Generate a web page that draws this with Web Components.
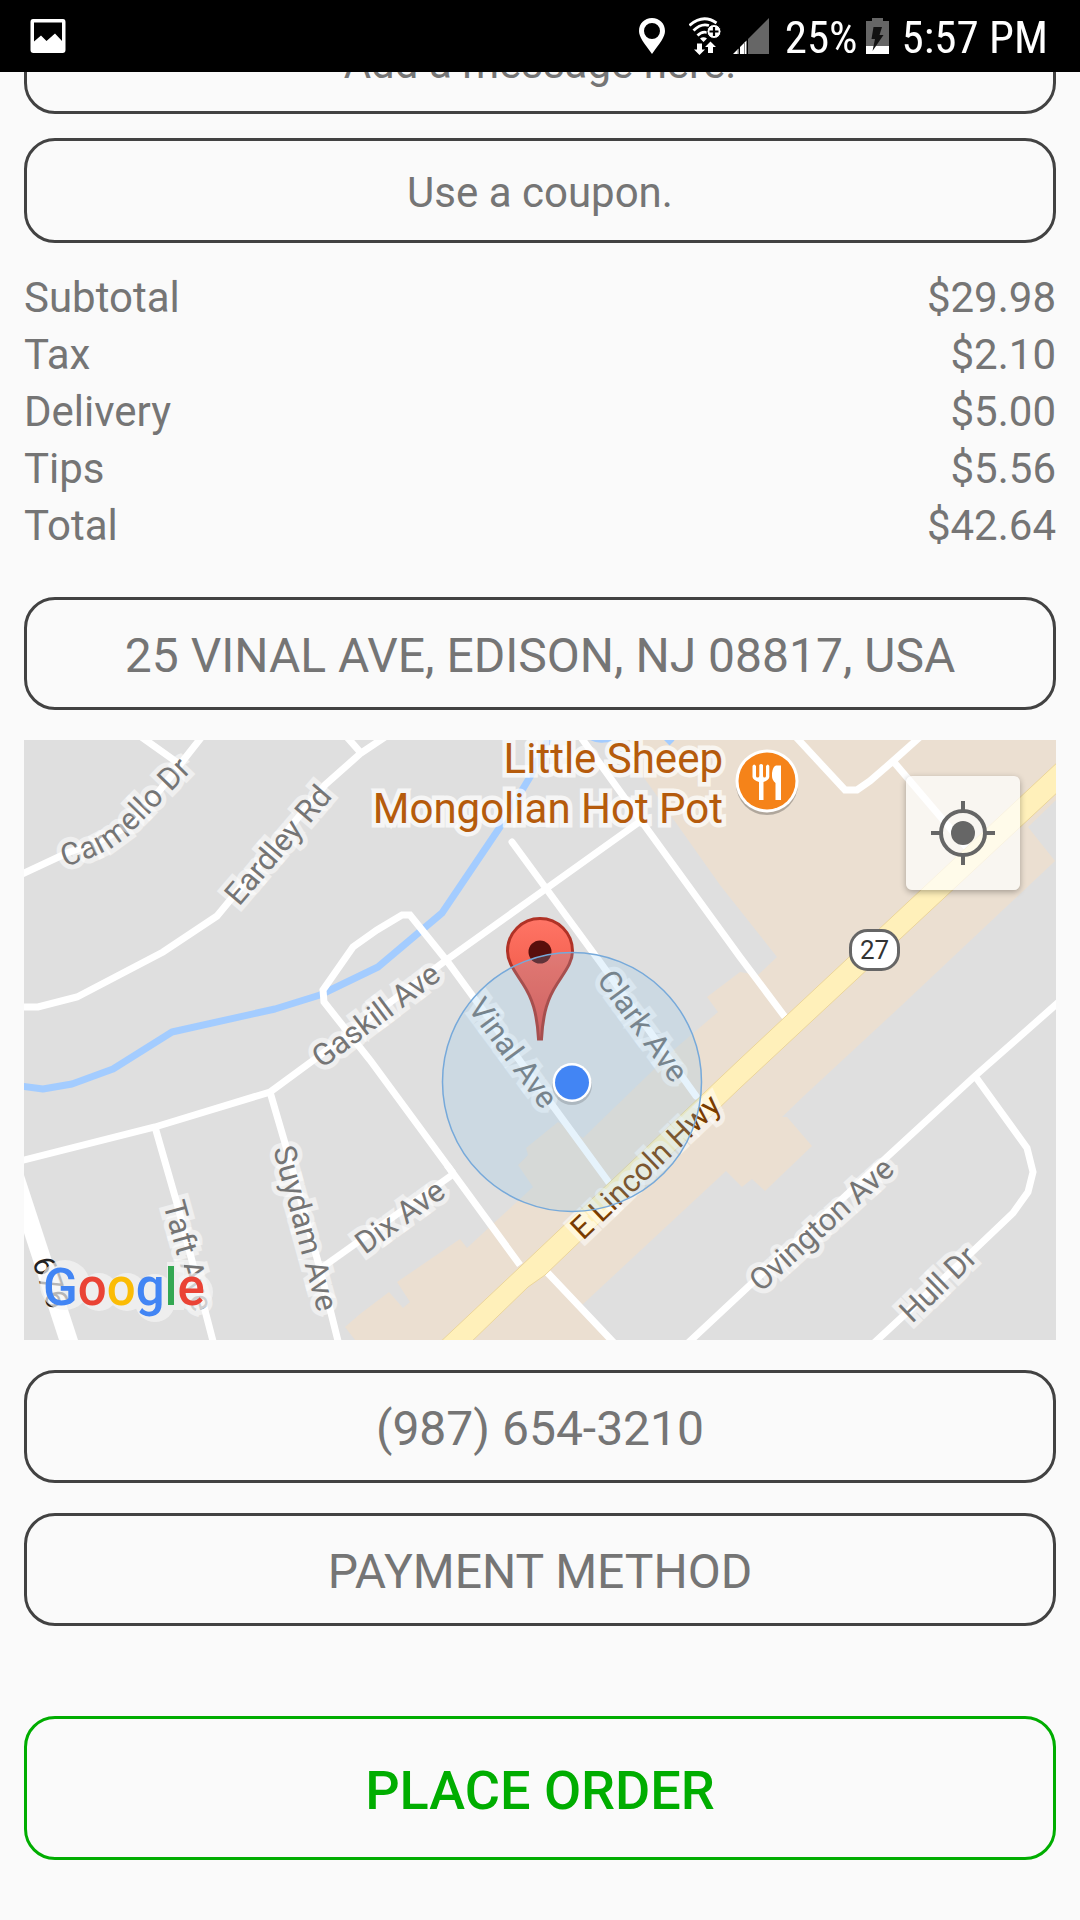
<!DOCTYPE html>
<html lang="en">
<head>
<meta charset="utf-8">
<meta name="viewport" content="width=device-width, initial-scale=1">
<title>Checkout</title>
<style>
  body { margin: 0; background: #fafafa; font-family: Roboto, "Liberation Sans", sans-serif; color: #757575; }
</style>
</head>
<body>
<checkout-page></checkout-page>

<template id="status-bar">
  <style>
    :host { position: fixed; inset: 0 0 auto 0; z-index: 2; box-sizing: border-box; height: 72px; padding: 0 32px 0 30px;
      display: flex; align-items: center; justify-content: space-between; background: #000; color: #fff;
      font-family: "Roboto Condensed", Roboto, sans-serif; font-size: 45px; line-height: 72px; white-space: nowrap; }
    svg { display: block; flex: none; }
    .right { display: flex; align-items: center; }
    .wifi { margin-left: 24px; }
    .signal { margin-left: 12px; }
    .percent { margin-left: 16px; }
    .battery { margin: 0 13px 0 8px; }
    span { padding-top: 4px; }
  </style>
  <svg width="36" height="36" viewBox="0 0 36 36" role="img" aria-label="Screenshot saved">
    <path fill="#fff" fill-rule="evenodd" d="M3 1H33Q35.500 1 35.500 4V32Q35.500 35 32.500 35H3.500Q0.500 35 0.500 32V4Q0.500 1 3 1ZM4 4.500V23.500L11 17.500L16.500 23L25 15.500L32 23V4.500Z"/>
  </svg>
  <div class="right">
    <svg width="26" height="36" viewBox="0 0 26 36" role="img" aria-label="Location on">
      <path fill="#fff" fill-rule="evenodd" d="M13 0C5.500 0 0 5.500 0 13C0 19 5 25 13 36C21 25 26 19 26 13C26 5.500 20.500 0 13 0ZM13 5A8 8 0 1 1 13 21A8 8 0 1 1 13 5Z"/>
    </svg>
    <svg class="wifi" width="32" height="38" viewBox="0 0 32 38" role="img" aria-label="Wi-Fi">
      <g fill="none" stroke="#fff" stroke-width="2.800">
        <path d="M0.500 8.500Q14 -3.500 27.500 6"/>
        <path d="M4.500 13.500Q12 6 20 8.500"/>
        <path d="M8.500 18.500Q13 14 18 15.500"/>
      </g>
      <circle cx="25" cy="14.500" r="7" fill="#fff" stroke="#000"/>
      <path d="M25 10V19M20.500 14.500H29.500" stroke="#000" stroke-width="2.200"/>
      <path fill="#fff" d="M11 21.500Q14.500 19 18 21.500L14.500 25ZM8 26.500H13V32.500H16L10.500 38L5 32.500H8ZM19 36V30H16L21.500 24.500L27 30H24V36Z"/>
    </svg>
    <svg class="signal" width="36" height="36" viewBox="0 0 36 36" role="img" aria-label="Signal strength">
      <path fill="#666" d="M15 21L36 0V36H15Z"/>
      <path fill="#fff" d="M0 36L5.500 30.500V36ZM7 36V29L13.500 22.500V36Z"/>
      <path stroke="#888" stroke-width="1" d="M11.500 25V36M5 31.500V36"/>
    </svg>
    <span class="percent">25%</span>
    <svg class="battery" width="23" height="36" viewBox="0 0 23 36" role="img" aria-label="Charging">
      <path fill="#666" d="M6 0H17V3H23V36H0V3H6Z"/>
      <path fill="#fff" d="M0 28H23V36H0Z"/>
      <path fill="#111" d="M7.500 9H16L13.500 17H17.500L6.500 33L9 21H5.500Z"/>
    </svg>
    <span>5:57 PM</span>
  </div>
</template>

<template id="outline-button">
  <style>
    :host { display: block; --ink: #757575; --line: #424242; --size: 48px; --height: 113px; --weight: 400; --drop: 4px; }
    :host([kind="small"]) { --size: 42px; --height: 105px; --drop: 6px; }
    :host([kind="primary"]) { --ink: #00ad00; --line: #00ad00; --size: 54px; --height: 144px; --weight: 500; --drop: 6px; }
    button { display: block; box-sizing: border-box; width: 100%; min-height: var(--height); margin: 0; padding: var(--drop) 24px 0;
      border: 3px solid var(--line); border-radius: 31px; background: transparent;
      font: var(--weight) var(--size)/1.2 Roboto, "Liberation Sans", sans-serif; color: var(--ink); text-align: center; }
  </style>
  <button type="button"><slot></slot></button>
</template>

<template id="order-totals">
  <style>
    :host { display: block; }
    table { width: 100%; border-collapse: collapse; font-size: 42px; line-height: 57px; }
    th, td { padding: 0; font-weight: 400; }
    th { text-align: left; }
    td { text-align: right; }
  </style>
  <table>
    <tbody>
      <tr><th scope="row">Subtotal</th><td>$29.98</td></tr>
      <tr><th scope="row">Tax</th><td>$2.10</td></tr>
      <tr><th scope="row">Delivery</th><td>$5.00</td></tr>
      <tr><th scope="row">Tips</th><td>$5.56</td></tr>
      <tr><th scope="row">Total</th><td>$42.64</td></tr>
    </tbody>
  </table>
</template>

<template id="delivery-map">
  <style>
    :host { display: block; position: relative; }
    .map { display: block; width: 100%; height: auto; }
    .labels text { font-size: 31px; fill: #757575; stroke: rgba(255,255,255,.5); stroke-width: 10px; paint-order: stroke; }
    .labels .highway { fill: #7a3c00; }
    .labels .county { fill: #222; stroke: none; }
    .poi text { font-size: 42px; fill: #b55b0c; stroke: rgba(255,255,255,.7); stroke-width: 9px; paint-order: stroke; text-anchor: end; }
    button { position: absolute; top: 36px; right: 36px; width: 114px; height: 114px; padding: 0; border: 0; border-radius: 6px;
      display: flex; align-items: center; justify-content: center; background: rgba(255,255,255,.7); box-shadow: 0 2px 6px rgba(0,0,0,.3); }
  </style>
  <svg class="map" viewBox="24 740 1032 600" role="img" aria-label="Map of the delivery address">
    <defs>
      <linearGradient id="pin" x1="0" y1="0" x2="0" y2="1"><stop offset="0" stop-color="#ff7566"/><stop offset=".45" stop-color="#f4604f"/><stop offset="1" stop-color="#e04a40"/></linearGradient>
      <path id="carmello" d="M65 867C85 860 112 852 130 834L200 762"/>
    </defs>
    <path fill="#dfdfdf" d="M24 740H1056V1340H24Z"/>
    <path fill="#ebdfd1" d="M625 740L640 772L720 885L777 957L758 975L740 972L707 997L718 1012L677 1047L583 1138L558 1122L526 1148L528 1155L518 1165L533 1187L495 1222L467 1248L460 1239L397 1282L410 1302L403 1308L389 1292L360 1314L345 1327L355 1340H612L582 1305L726 1171L742 1187L752 1179L765 1191L812 1146L787 1117H782L806 1094L902 1005L1055 861L1028 827L1056 800V740Z"/>
    <g fill="none" stroke="#a3ccff" stroke-width="7" stroke-linejoin="round">
      <path d="M20 1086L43 1089L72 1084L113 1069L172 1032L275 1009L320 995L378 967L442 913L500 827L530 777L550 736"/>
      <path d="M590 736Q600 742 612 737M664 735L672 743"/>
    </g>
    <path fill="#fff" d="M24 1175L78 1340H59L24 1233Z"/>
    <g fill="none" stroke="#fff" stroke-width="7">
      <path d="M20 875L67 853L97 842L127 827L160 790L182 762L204 734M140 736L178 763"/>
      <path d="M20 1007H38L77 997L163 952L217 916L325 785L361 753L388 735M346 736L361 753"/>
      <path d="M453 1173L370 1060L324 1002L323 990L353 947L377 930L402 915H410L447 961L610 1184"/>
      <path d="M447 1165L520 1265M546 1271L616 1345"/>
      <path d="M320 1269L452 1175"/>
      <path d="M20 1161L155 1127L270 1092L315 1059L445 961L547 888L642 820"/>
      <path stroke-linecap="round" d="M512 842L600 962L696 1096"/>
      <path d="M580 736L642 822L740 957L785 1017"/>
      <path d="M270 1092L287 1150L320 1269L339 1345M155 1127L178 1207L214 1345"/>
      <path d="M795 736L845 790H857L870 781L893 761L921 736M893 761L967 848"/>
      <path d="M1060 1001L975 1076L887 1157L688 1343M975 1076L1027 1148L1033 1172L1028 1192L1013 1213L970 1254L874 1343"/>
    </g>
    <path fill="#fff0ba" stroke="#ebd59b" d="M436 1346L520 1267L740 1059L1060 760V790L740 1088L545 1275L528 1287L467 1346Z"/>
    <g class="labels">
      <text><textPath href="#carmello">Carmello Dr</textPath></text>
      <text transform="translate(239 907) rotate(-49.500)">Eardley Rd</text>
      <text transform="translate(322 1069) rotate(-37)">Gaskill Ave</text>
      <text transform="translate(467 1008) rotate(53.700)">Vinal Ave</text>
      <text transform="translate(596 980) rotate(53.700)">Clark Ave</text>
      <text class="highway" transform="translate(583 1241) rotate(-43.700)">E Lincoln Hwy</text>
      <text transform="translate(365 1255) rotate(-36)">Dix Ave</text>
      <text transform="translate(273 1149) rotate(74.700)">Suydam Ave</text>
      <text transform="translate(163 1204) rotate(74.500)">Taft Ave</text>
      <text transform="translate(761 1293) rotate(-42)">Ovington Ave</text>
      <text transform="translate(912 1324) rotate(-44)">Hull Dr</text>
      <text class="county" transform="translate(32 1261) rotate(71)">676</text>
    </g>
    <g>
      <rect x="850.500" y="930.500" width="48" height="39" rx="17" fill="#fff" stroke="#666" stroke-width="3"/>
      <text x="874.500" y="959" font-size="26" text-anchor="middle" fill="#333">27</text>
    </g>
    <g class="poi">
      <text x="723" y="773">Little Sheep</text>
      <text x="723" y="823">Mongolian Hot Pot</text>
      <circle cx="767" cy="784" r="31" fill="#000" opacity=".25"/>
      <circle cx="767" cy="781" r="31.500" fill="#fff"/>
      <circle cx="767" cy="781" r="28.500" fill="#f58319"/>
      <path fill="#fff" d="M752.500 766Q754 763 756 766V776Q756 777.500 757.500 777.500Q759.300 777.500 759.300 776V765Q761 763 763 765V776Q763 777.500 764.500 777.500Q766 777.500 766 776V766Q768 763 769.300 766V777Q769 780 763.500 782V800H759V782Q753 780 752.500 777ZM781 765.500V800H775.500V783Q772 780 772 776V773Q773 766 776 765.500Z"/>
    </g>
    <g>
      <path fill="url(#pin)" stroke="#b03226" stroke-width="3" d="M538.500 1039C537 1012 532 998 523 984C514 970 507.500 962 507.500 951A32.500 32.500 0 0 1 572.500 951C572.500 962 566 970 557 984C548 998 543 1012 541.500 1039Z"/>
      <circle cx="540" cy="952" r="11.500" fill="#590f0c"/>
    </g>
    <circle cx="572" cy="1082" r="129.500" fill="rgba(130,195,240,.2)" stroke="#76a9da" stroke-width="1.500"/>
    <circle cx="572" cy="1085" r="20" fill="#000" opacity=".15"/>
    <circle cx="572" cy="1082.500" r="19.500" fill="#fff"/>
    <circle cx="572" cy="1082.500" r="17" fill="#4285f4"/>
    <g fill="#f5f5f5" opacity=".7">
      <circle cx="65" cy="1285" r="25"/>
      <circle cx="99" cy="1292" r="19"/>
      <circle cx="127" cy="1292" r="19"/>
      <circle cx="155" cy="1293" r="19"/>
      <circle cx="155" cy="1302" r="20"/>
      <path d="M167 1262H184V1310H167Z"/>
      <circle cx="194" cy="1292" r="19"/>
    </g>
    <text x="43" y="1305" font-size="51" font-weight="500"><tspan fill="#4285f4">G</tspan><tspan fill="#ea4335">o</tspan><tspan fill="#fbbc05">o</tspan><tspan fill="#4285f4">g</tspan><tspan fill="#34a853">l</tspan><tspan fill="#ea4335">e</tspan></text>
  </svg>
  <button type="button" aria-label="Show my location">
    <svg width="64" height="64" viewBox="0 0 64 64">
      <circle cx="32" cy="32" r="22" fill="none" stroke="#666" stroke-width="4"/>
      <circle cx="32" cy="32" r="12" fill="#666"/>
      <path d="M32 0V9M32 55V64M0 32H9M55 32H64" stroke="#666" stroke-width="4"/>
    </svg>
  </button>
</template>

<template id="checkout-page">
  <style>
    :host { display: block; }
    main { display: flex; flex-direction: column; padding: 9px 24px 60px; }
    .extras { display: flex; flex-direction: column; gap: 24px; }
    order-totals { margin: 26px 0 43px; }
    .details { display: flex; flex-direction: column; gap: 30px; margin-bottom: 90px; }
  </style>
  <status-bar></status-bar>
  <main>
    <div class="extras">
      <outline-button kind="small">Add a message here.</outline-button>
      <outline-button kind="small">Use a coupon.</outline-button>
    </div>
    <order-totals></order-totals>
    <div class="details">
      <outline-button>25 VINAL AVE, EDISON, NJ 08817, USA</outline-button>
      <delivery-map></delivery-map>
      <outline-button>(987) 654-3210</outline-button>
      <outline-button>PAYMENT METHOD</outline-button>
    </div>
    <outline-button kind="primary">PLACE ORDER</outline-button>
  </main>
</template>

<script>
  class TemplateElement extends HTMLElement {
    constructor() {
      super();
      const template = document.getElementById(this.localName);
      this.attachShadow({ mode: "open" }).append(template.content.cloneNode(true));
    }
  }
  class StatusBar extends TemplateElement {}
  class OutlineButton extends TemplateElement {}
  class OrderTotals extends TemplateElement {}
  class DeliveryMap extends TemplateElement {}
  class CheckoutPage extends TemplateElement {}
  customElements.define("status-bar", StatusBar);
  customElements.define("outline-button", OutlineButton);
  customElements.define("order-totals", OrderTotals);
  customElements.define("delivery-map", DeliveryMap);
  customElements.define("checkout-page", CheckoutPage);
</script>
</body>
</html>
